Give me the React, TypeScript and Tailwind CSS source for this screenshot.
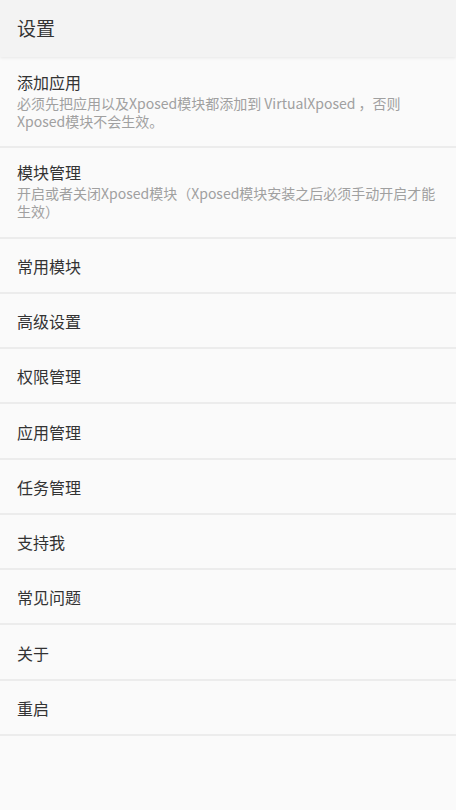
import React from "react";

const font = { fontFamily: '"Noto Sans CJK SC", "Noto Sans", sans-serif' };

function SubRow({ title, sub, tall }: { title: string; sub: React.ReactNode; tall?: boolean }) {
  return (
    <div
      className={
        "border-b-2 border-[#ececec] bg-[#fafafa] px-[17px] pt-[13px] " +
        (tall ? "pb-[17px]" : "pb-[16px]")
      }
    >
      <div className="text-[16px] leading-[22px] text-[#333333]">{title}</div>
      <div className="mt-[1px] text-[14px] leading-[18px] text-[#a0a0a0]">{sub}</div>
    </div>
  );
}

function Row({ title, tall }: { title: string; tall?: boolean }) {
  return (
    <div
      className={
        "flex items-center border-b-2 border-[#ececec] bg-[#fafafa] px-[17px] pt-[1px] " +
        (tall ? "h-[56px]" : "h-[55px]")
      }
    >
      <div className="text-[16px] leading-[22px] text-[#333333]">{title}</div>
    </div>
  );
}

export default function App() {
  return (
    <div className="flex min-h-[810px] w-[456px] flex-col bg-[#fafafa]" style={font}>
      <div className="relative z-10 flex h-[57px] items-center bg-[#f3f3f3] px-[17px] shadow-[0_1px_3px_rgba(0,0,0,0.08)]">
        <span className="text-[19px] text-[#333333]">设置</span>
      </div>
      <div className="h-[1px]" />
      <SubRow
        title="添加应用"
        sub={
          <>
            必须先把应用以及Xposed模块都添加到 VirtualXposed ，否则
            <br />
            Xposed模块不会生效。
          </>
        }
      />
      <SubRow
        tall
        title="模块管理"
        sub={
          <>
            开启或者关闭Xposed模块（Xposed模块安装之后必须手动开启才能
            <br />
            生效）
          </>
        }
      />
      <Row title="常用模块" />
      <Row title="高级设置" />
      <Row title="权限管理" />
      <Row title="应用管理" tall />
      <Row title="任务管理" />
      <Row title="支持我" />
      <Row title="常见问题" />
      <Row title="关于" tall />
      <Row title="重启" />
    </div>
  );
}
